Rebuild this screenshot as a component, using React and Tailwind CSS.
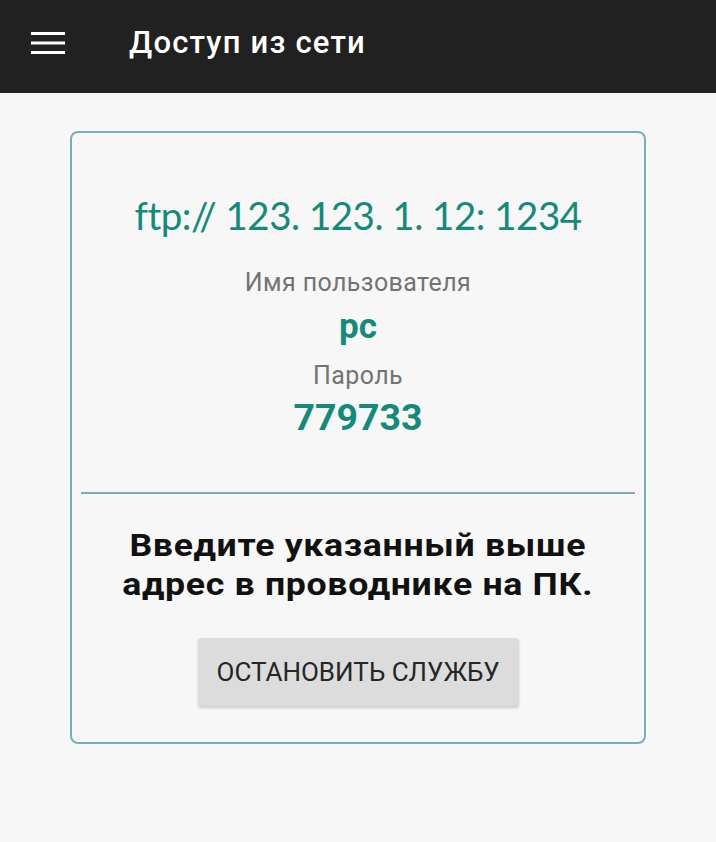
import React from "react";

const App = () => {
  return (
    <div className="min-h-[842px] bg-[#f7f7f7] font-['Roboto',sans-serif]">
      {/* top bar */}
      <div className="h-[93px] bg-[#212121] flex items-center px-[31px]">
        <svg width="34" height="24" viewBox="0 0 34 24" className="mb-[8px]">
          <rect x="0" y="1" width="34" height="3" fill="#fff" />
          <rect x="0" y="10.5" width="34" height="3" fill="#fff" />
          <rect x="0" y="20" width="34" height="3" fill="#fff" />
        </svg>
        <h1 className="ml-[64px] mb-[6px] text-[31px] font-medium text-white tracking-[1.2px]">Доступ из сети</h1>
      </div>

      <div className="px-[70px] pt-[38px]">
        <div className="border-2 border-[#76afba] rounded-[8px] flex flex-col items-center">
          <p className="mt-[58px] text-[38.5px] leading-[48px] text-[#15897a] font-['Lato',sans-serif] tracking-[-0.5px]">
            ftp:// 123. 123. 1. 12: 1234
          </p>
          <p className="mt-[29px] text-[25px] leading-[30px] text-[#737373] tracking-[0.4px]">Имя пользователя</p>
          <p className="mt-[9px] text-[35px] leading-[40px] font-bold text-[#15897a]">pc</p>
          <p className="mt-[14px] text-[25px] leading-[30px] text-[#737373] tracking-[0.4px]">Пароль</p>
          <p className="mt-[4px] text-[37.5px] leading-[44px] font-bold text-[#15897a]">779733</p>

          <div className="mt-[53px] w-[calc(100%-18px)] h-[2px] bg-[#76afba]" />

          <p className="mt-[32px] text-[31px] leading-[39px] font-bold text-[#111] text-center tracking-[0.6px] scale-x-[1.15]">
            Введите указанный выше
            <br />
            адрес в проводнике на ПК.
          </p>

          <button className="mt-[34px] mb-[36px] w-[321px] h-[68px] rounded-[3px] bg-[#dcdcdc] shadow-[0_2px_3px_rgba(0,0,0,0.18)] text-[26px] text-[#262626] uppercase">
            Остановить службу
          </button>
        </div>
      </div>
    </div>
  );
};

export default App;
